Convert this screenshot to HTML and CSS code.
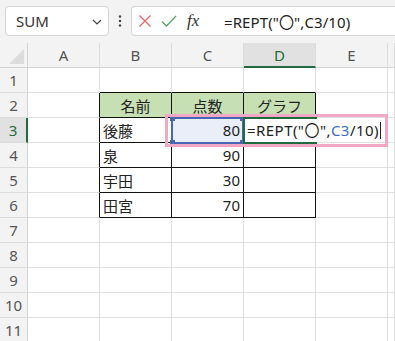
FILE: index.html
```html
<!DOCTYPE html>
<html lang="ja">
<head>
  <meta charset="UTF-8" />
  <meta name="viewport" content="width=device-width, initial-scale=1.0"/>
  <title>REPT グラフ</title>
  <link rel="stylesheet" href="styles.css">
</head>
<body>
  <!-- 数式バー -->
  <div class="toolbar">
    <div class="namebox">
      <span>SUM</span>
      <svg class="chev" width="10" height="6" viewBox="0 0 10 6"><path d="M1 1 L5 5 L9 1" fill="none" stroke="#444" stroke-width="1.2"/></svg>
    </div>
    <div class="dots">
      <svg width="4" height="12" viewBox="0 0 4 12"><circle cx="2" cy="1.5" r="1.2" fill="#444"/><circle cx="2" cy="6" r="1.2" fill="#444"/><circle cx="2" cy="10.5" r="1.2" fill="#444"/></svg>
    </div>
    <div class="formula">
      <div class="fbtns">
        <svg width="14" height="14" viewBox="0 0 14 14"><path d="M1.5 1.5 L12.5 12.5 M12.5 1.5 L1.5 12.5" stroke="#e06666" stroke-width="1.3"/></svg>
        <svg width="16" height="14" viewBox="0 0 16 14"><path d="M1 7.5 L5.5 12 L15 2" fill="none" stroke="#5aa867" stroke-width="1.3"/></svg>
        <span class="fx">fx</span>
      </div>
      <div class="ftext">=REPT("〇",C3/10)</div>
    </div>
  </div>

  <!-- シート -->
  <div class="sheet">
    <div class="grid">
      <div class="corner"></div>
      <div class="colh">A</div>
      <div class="colh">B</div>
      <div class="colh">C</div>
      <div class="colh active">D</div>
      <div class="colh">E</div>
      <div class="colh"></div>

      <div class="rowh">1</div>
      <div class="c"></div><div class="c tb"></div><div class="c tb"></div><div class="c tb"></div><div class="c"></div><div class="c"></div>

      <div class="rowh">2</div>
      <div class="c tl"></div>
      <div class="c t head">名前</div>
      <div class="c t head">点数</div>
      <div class="c t head">グラフ</div>
      <div class="c"></div><div class="c"></div>

      <div class="rowh active">3</div>
      <div class="c tl"></div>
      <div class="c t">後藤</div>
      <div class="c t num ref">80</div>
      <div class="c t"></div>
      <div class="c"></div><div class="c"></div>

      <div class="rowh">4</div>
      <div class="c tl"></div>
      <div class="c t">泉</div>
      <div class="c t num">90</div>
      <div class="c t"></div>
      <div class="c"></div><div class="c"></div>

      <div class="rowh">5</div>
      <div class="c tl"></div>
      <div class="c t">宇田</div>
      <div class="c t num">30</div>
      <div class="c t"></div>
      <div class="c"></div><div class="c"></div>

      <div class="rowh">6</div>
      <div class="c tl"></div>
      <div class="c t">田宮</div>
      <div class="c t num">70</div>
      <div class="c t"></div>
      <div class="c"></div><div class="c"></div>

      <div class="rowh">7</div>
      <div class="c"></div><div class="c"></div><div class="c"></div><div class="c"></div><div class="c"></div><div class="c"></div>
      <div class="rowh">8</div>
      <div class="c"></div><div class="c"></div><div class="c"></div><div class="c"></div><div class="c"></div><div class="c"></div>
      <div class="rowh">9</div>
      <div class="c"></div><div class="c"></div><div class="c"></div><div class="c"></div><div class="c"></div><div class="c"></div>
      <div class="rowh">10</div>
      <div class="c"></div><div class="c"></div><div class="c"></div><div class="c"></div><div class="c"></div><div class="c"></div>
      <div class="rowh">11</div>
      <div class="c"></div><div class="c"></div><div class="c"></div><div class="c"></div><div class="c"></div><div class="c"></div>
    </div>

    <!-- 参照セル C3 の枠 -->
    <div class="refbox">
      <i class="h h1"></i><i class="h h2"></i><i class="h h3"></i><i class="h h4"></i>
    </div>
    <!-- 編集中の D3 -->
    <div class="activecell"></div>
    <div class="editor">=REPT("〇",<span class="blue">C3</span>/10)<i class="caret"></i></div>
    <!-- 強調の枠 -->
    <div class="mark"></div>
  </div>
</body>
</html>
```

FILE: styles.css
```css
body {
  margin: 0;
  width: 395px;
  height: 341px;
  overflow: hidden;
  background: #fff;
  font-family: 'Noto Sans', 'Noto Sans CJK JP', sans-serif;
  color: #222;
}

.toolbar {
  height: 43px;
  background: #f3f3f3;
  display: flex;
  align-items: flex-start;
  padding-top: 6px;
  box-sizing: border-box;
  overflow: hidden;
}

.namebox {
  margin-left: 5px;
  width: 104px;
  height: 30px;
  box-sizing: border-box;
  background: #fff;
  border: 1px solid #d6d6d6;
  border-radius: 4px;
  display: flex;
  align-items: center;
  justify-content: space-between;
  padding: 0 6px 0 10px;
  font-size: 15px;
  color: #333;
}

.chev {
  margin-top: 2px;
}

.dots {
  width: 22px;
  height: 30px;
  display: flex;
  align-items: center;
  justify-content: center;
}

.formula {
  flex: 1;
  height: 30px;
  box-sizing: border-box;
  background: #fff;
  border: 1px solid #d6d6d6;
  border-right: none;
  border-radius: 4px 0 0 4px;
  display: flex;
  align-items: center;
}

.fbtns {
  display: flex;
  align-items: center;
  gap: 9px;
  padding-left: 6px;
  width: 84px;
  box-sizing: border-box;
}

.fx {
  font-family: 'Liberation Serif', serif;
  font-style: italic;
  font-size: 17px;
  color: #333;
  margin-left: 1px;
}

.ftext {
  font-size: 15px;
  color: #222;
  padding-left: 8px;
  letter-spacing: 0.1px;
}

.sheet {
  position: relative;
  overflow: hidden;
}

.grid {
  display: grid;
  grid-template-columns: 28px repeat(5, 72px) 7px;
  grid-auto-rows: 25px;
}

.grid > div {
  box-sizing: border-box;
  display: flex;
  align-items: center;
  font-size: 15px;
}

.corner {
  background: #f3f3f3;
  border-right: 1px solid #d4d4d4;
  border-bottom: 1px solid #d4d4d4;
  position: relative;
}

.corner::after {
  content: "";
  position: absolute;
  right: 3px;
  bottom: 3px;
  border-left: 15px solid transparent;
  border-bottom: 15px solid #dcdcdc;
}

.colh {
  background: #f3f3f3;
  border-right: 1px solid #dcdcdc;
  border-bottom: 1px solid #d4d4d4;
  justify-content: center;
  color: #555;
}

.colh.active {
  background: #e1e1e1;
  border-bottom: 2px solid #1f6b3d;
  color: #1f6b3d;
}

.rowh {
  background: #f3f3f3;
  border-right: 1px solid #d4d4d4;
  border-bottom: 1px solid #dcdcdc;
  justify-content: center;
  color: #555;
}

.rowh.active {
  background: #e1e1e1;
  border-right: 2px solid #1f6b3d;
  color: #1f6b3d;
}

.c {
  border-right: 1px solid #e0e0e0;
  border-bottom: 1px solid #e0e0e0;
  padding: 0 3px;
}

.c.t {
  border-right-color: #111;
  border-bottom-color: #111;
}

.c.tl {
  border-right-color: #111;
}

.c.tb {
  border-bottom-color: #111;
}

.head {
  background: #c6e0b4;
  justify-content: center;
}

.num {
  justify-content: flex-end;
}

.ref {
  background: #e9eef9;
}

.refbox {
  position: absolute;
  left: 171px;
  top: 74px;
  width: 73px;
  height: 27px;
  box-sizing: border-box;
  border: 2px solid #4767b2;
}

.h {
  position: absolute;
  width: 5px;
  height: 5px;
  background: #4767b2;
}

.h1 { left: -3px; top: -3px; }
.h2 { right: -3px; top: -3px; }
.h3 { left: -3px; bottom: -3px; }
.h4 { right: -3px; bottom: -3px; }

.activecell {
  position: absolute;
  left: 243px;
  top: 74px;
  width: 74px;
  height: 27px;
  box-sizing: border-box;
  border: 2px solid #1f6b3d;
}

.editor {
  position: absolute;
  left: 245px;
  top: 76px;
  width: 140px;
  height: 23px;
  background: #fff;
  font-size: 15px;
  letter-spacing: 0.45px;
  line-height: 23px;
  padding-left: 2px;
  box-sizing: border-box;
  white-space: nowrap;
}

.blue {
  color: #3a6fc4;
}

.caret {
  display: inline-block;
  width: 1px;
  height: 17px;
  background: #222;
  vertical-align: -3px;
  margin-left: 1px;
}

.mark {
  position: absolute;
  left: 165px;
  top: 71px;
  width: 223px;
  height: 33px;
  box-sizing: border-box;
  border: 3px solid #f2a7c5;
}
```
